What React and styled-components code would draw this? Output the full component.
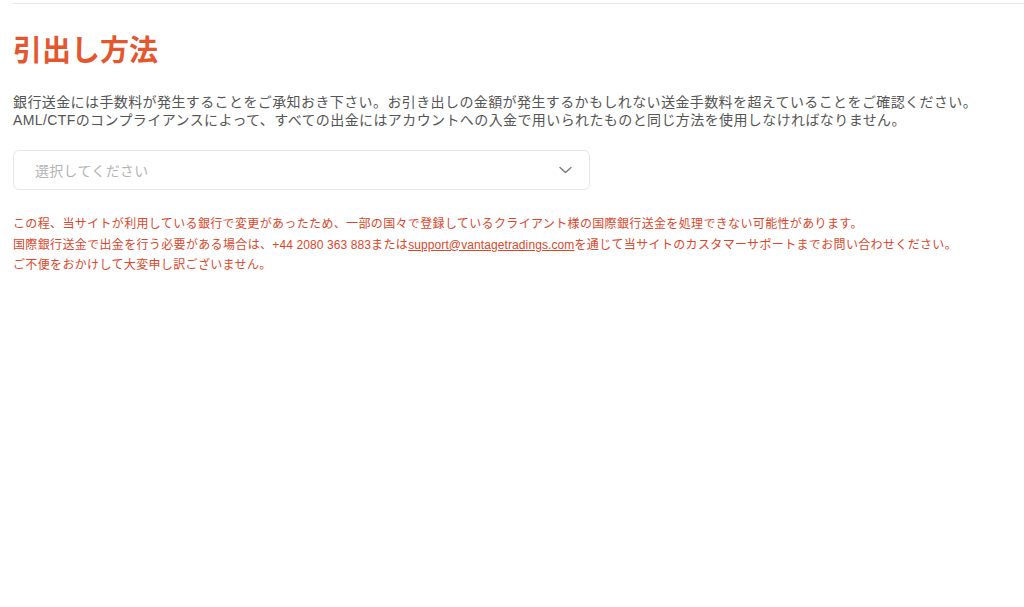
import styled, { createGlobalStyle } from "styled-components";

const GlobalStyle = createGlobalStyle`
  html, body {
    margin: 0;
    padding: 0;
    background: #ffffff;
  }
  body {
    font-family: "Liberation Sans", "Noto Sans CJK JP", sans-serif;
  }
`;

const Page = styled.div`
  padding: 3px 0 0 13px;
`;

const Section = styled.section`
  border-top: 1px solid #e4e4e4;
`;

const Title = styled.h1`
  margin: 29px 0 0;
  font-size: 29px;
  line-height: 36px;
  font-weight: 700;
  color: #e4572e;
`;

const Intro = styled.p`
  margin: 24px 0 0;
  font-size: 14px;
  line-height: 18px;
  letter-spacing: 0.4px;
  color: #555555;
`;

const Select = styled.div`
  margin-top: 21px;
  width: 577px;
  height: 40px;
  box-sizing: border-box;
  border: 1px solid #e6e6e6;
  border-radius: 6px;
  display: flex;
  align-items: center;
  justify-content: space-between;
  padding: 0 17px 0 21px;
  cursor: pointer;
`;

const Placeholder = styled.span`
  font-size: 14px;
  color: #b4b4b4;
  letter-spacing: 0.3px;
`;

const Notice = styled.div`
  margin-top: 24px;
  font-size: 12px;
  line-height: 20.5px;
  letter-spacing: 0.35px;
  color: #d9472b;
`;

const Line = styled.div``;

const Latin = styled.span`
  letter-spacing: 0.1px;
`;

const MailLink = styled.a`
  color: #d9472b;
  text-decoration: underline;
  letter-spacing: 0.1px;
`;

function Chevron() {
  return (
    <svg width="13" height="8" viewBox="0 0 13 8" fill="none">
      <path d="M1 1.5l5.5 5 5.5-5" stroke="#777" strokeWidth="1.3" strokeLinecap="round" strokeLinejoin="round" />
    </svg>
  );
}

export default function App() {
  return (
    <Page>
      <GlobalStyle />
      <Section>
        <Title>引出し方法</Title>
        <Intro>
          銀行送金には手数料が発生することをご承知おき下さい。お引き出しの金額が発生するかもしれない送金手数料を超えていることをご確認ください。
          <br />
          AML/CTFのコンプライアンスによって、すべての出金にはアカウントへの入金で用いられたものと同じ方法を使用しなければなりません。
        </Intro>
        <Select>
          <Placeholder>選択してください</Placeholder>
          <Chevron />
        </Select>
        <Notice>
          <Line>この程、当サイトが利用している銀行で変更があったため、一部の国々で登録しているクライアント様の国際銀行送金を処理できない可能性があります。</Line>
          <Line>
            国際銀行送金で出金を行う必要がある場合は、<Latin>+44 2080 363 883</Latin>または
            <MailLink href="mailto:support@vantagetradings.com">support@vantagetradings.com</MailLink>
            を通じて当サイトのカスタマーサポートまでお問い合わせください。
          </Line>
          <Line>ご不便をおかけして大変申し訳ございません。</Line>
        </Notice>
      </Section>
    </Page>
  );
}
